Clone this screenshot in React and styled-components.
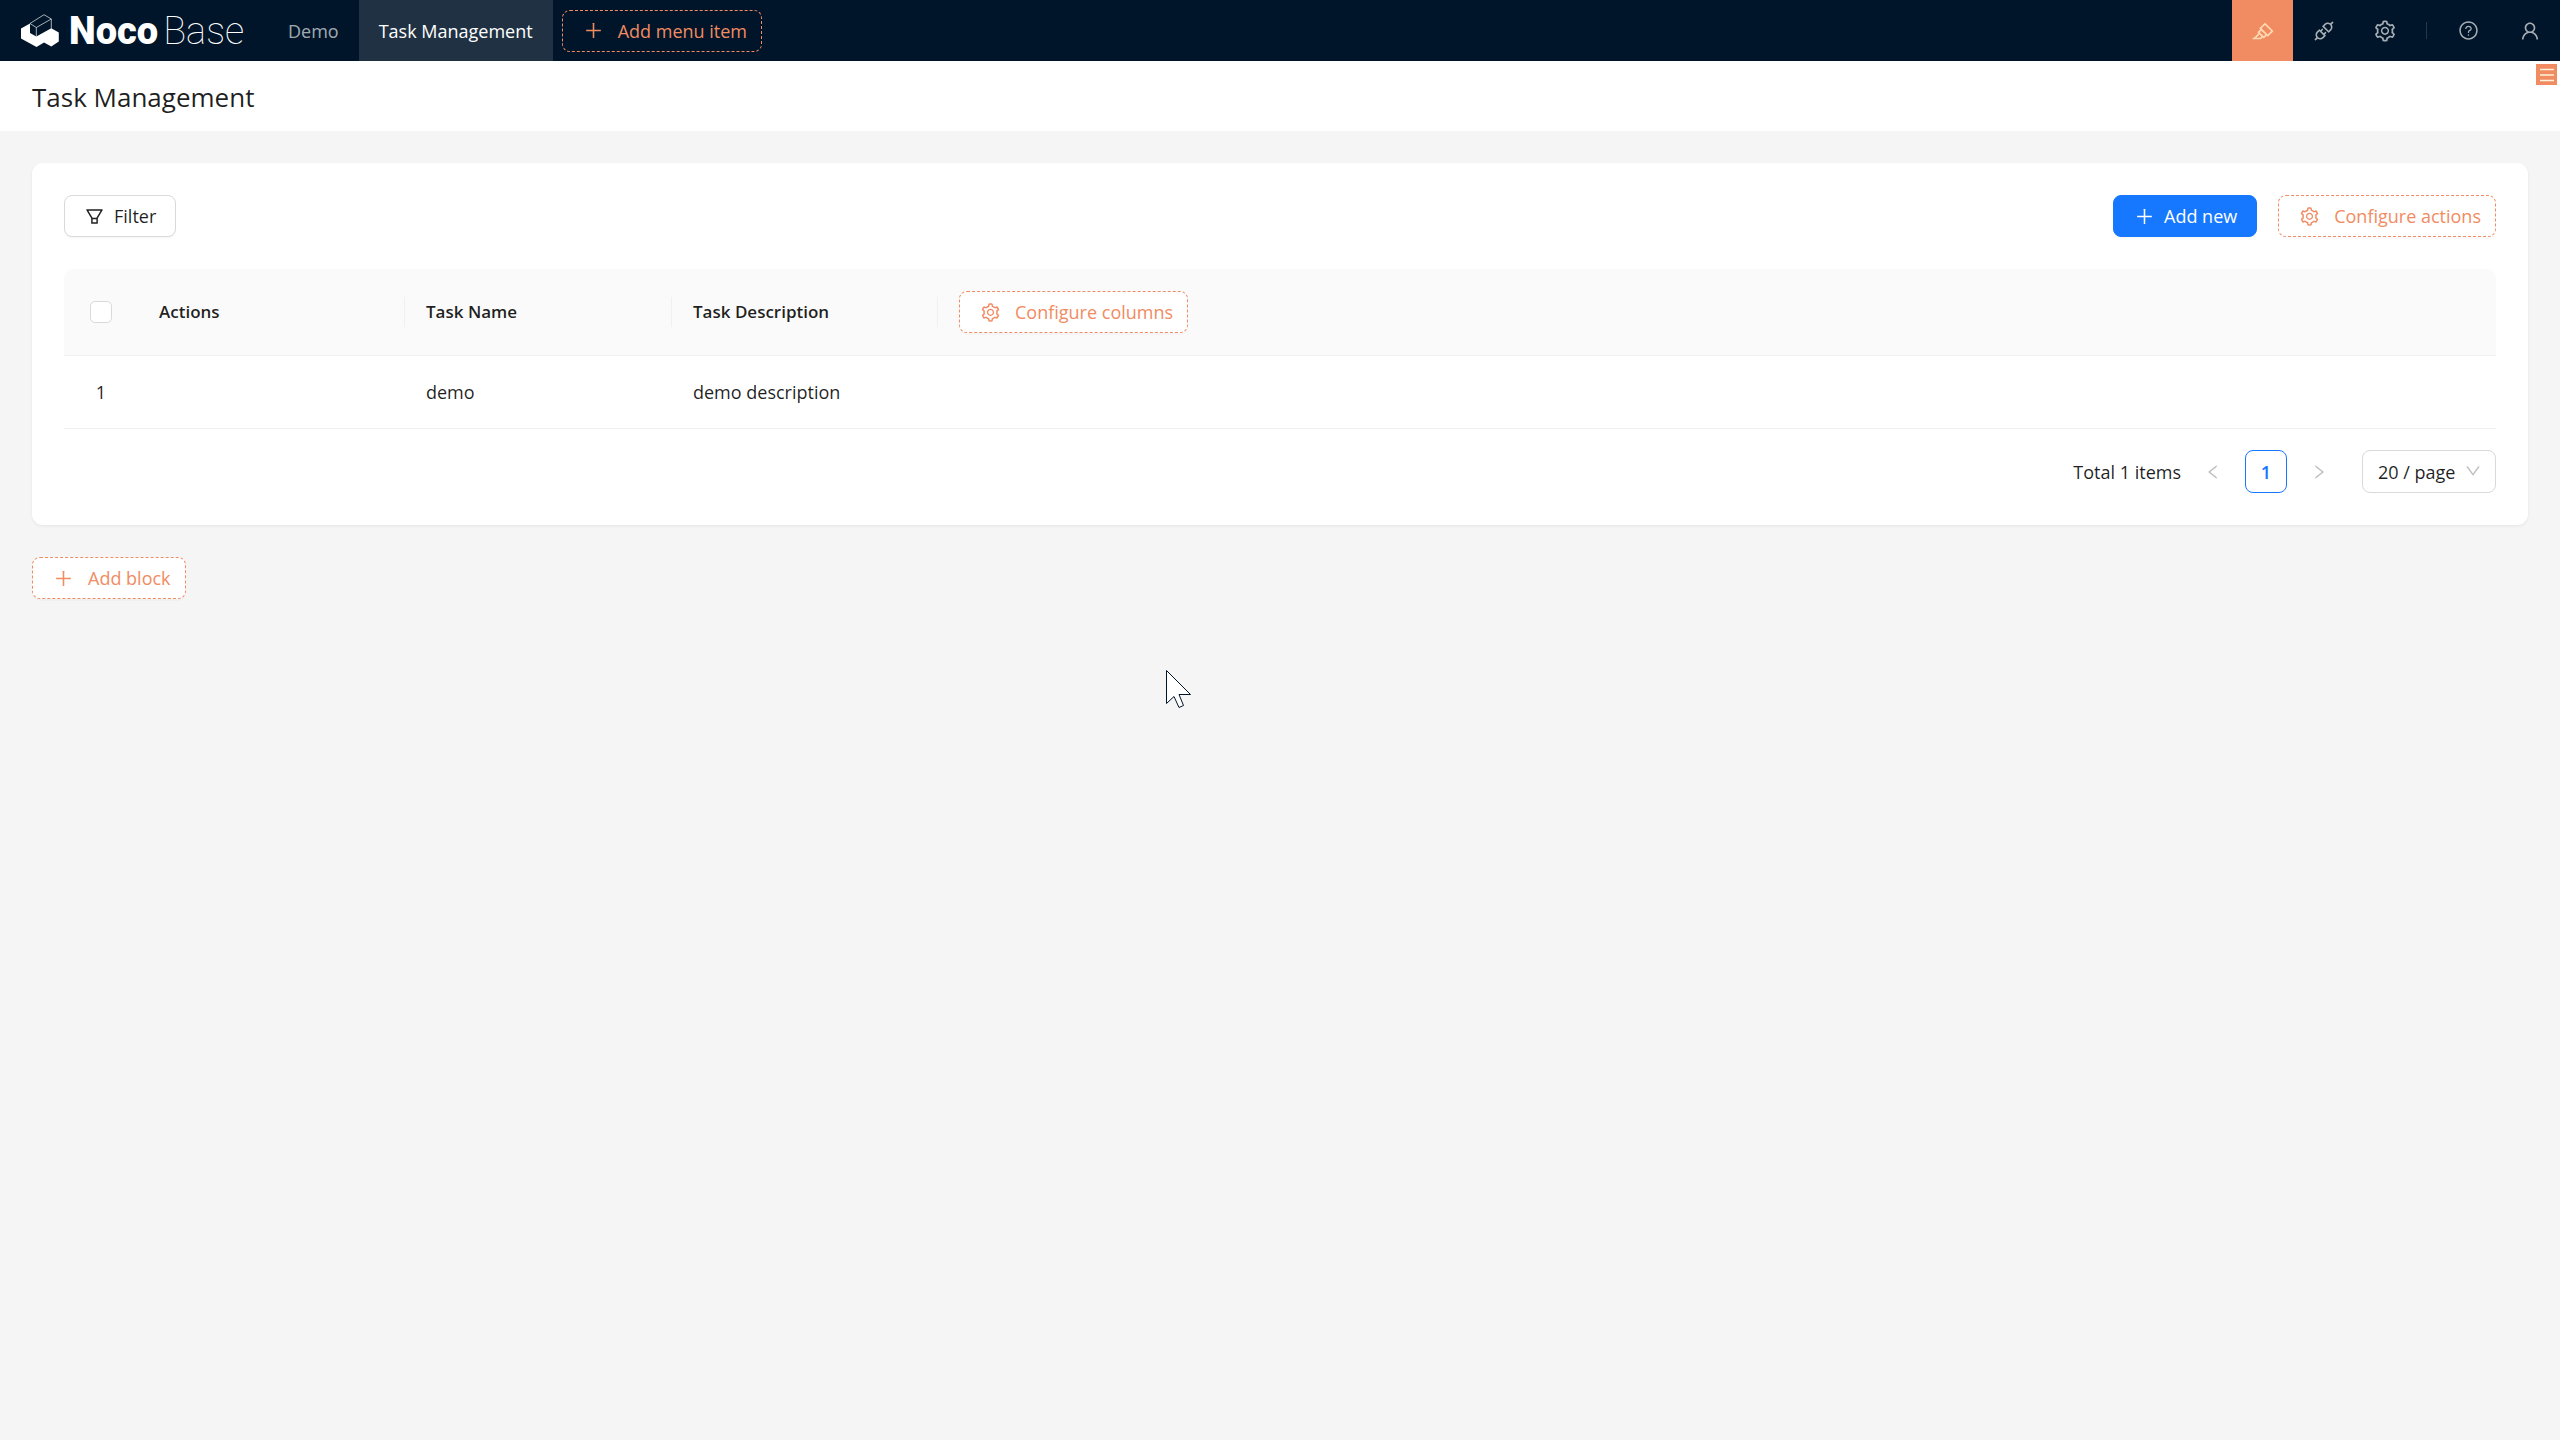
import React, { useState } from "react";
import styled, { createGlobalStyle } from "styled-components";
import {
  AiOutlineApi,
  AiOutlineDown,
  AiOutlineFilter,
  AiOutlineHighlight,
  AiOutlineLeft,
  AiOutlineMenu,
  AiOutlinePlus,
  AiOutlineQuestionCircle,
  AiOutlineRight,
  AiOutlineSetting,
  AiOutlineUser,
} from "react-icons/ai";

const color = {
  navy: "#001529",
  accent: "#f18b62",
  primary: "#1677ff",
  text: "rgba(0, 0, 0, 0.88)",
  page: "#f5f5f5",
  line: "#f0f0f0",
  border: "#d9d9d9",
};

const GlobalStyle = createGlobalStyle`
  *, *::before, *::after { box-sizing: border-box; }
  body {
    margin: 0;
    background: ${color.page};
    color: ${color.text};
    font-family: "Open Sans", "Noto Sans", sans-serif;
    font-size: 18px;
    line-height: 28px;
  }
  button, select, input { font: inherit; margin: 0; }
`;

const Header = styled.header`
  display: flex;
  align-items: stretch;
  height: 61px;
  background: ${color.navy};
`;

const Brand = styled.a`
  display: flex;
  align-items: center;
  gap: 10px;
  padding-left: 21px;
  width: 268px;
  color: #fff;
  text-decoration: none;
`;

const Wordmark = styled.span`
  display: flex;
  gap: 5px;
  font-family: Roboto, "Liberation Sans", sans-serif;
  font-size: 38px;
  line-height: 60px;
`;

const WordPart = styled.span`
  font-weight: ${(p) => p.$weight};
`;

const Menu = styled.nav`
  display: flex;
  flex: 1;
`;

const MenuLink = styled.a`
  display: flex;
  align-items: center;
  padding: 0 20px;
  color: ${(p) => (p.$active ? "#fff" : "rgba(255, 255, 255, 0.65)")};
  background: ${(p) => (p.$active ? "rgba(255, 255, 255, 0.12)" : "transparent")};
  text-decoration: none;
`;

const MenuAction = styled.div`
  display: flex;
  align-items: center;
  padding: 0 9px;
`;

const Tools = styled.div`
  display: flex;
  align-items: center;
`;

const ToolButton = styled.button`
  display: flex;
  align-items: center;
  justify-content: center;
  width: 61px;
  height: 61px;
  border: 0;
  padding: 0;
  font-size: ${(p) => p.$size || 24}px;
  color: ${(p) => (p.$active ? "#ffd9b0" : "rgba(255, 255, 255, 0.65)")};
  background: ${(p) => (p.$active ? color.accent : "transparent")};
`;

const Divider = styled.span`
  width: 1px;
  height: 17px;
  margin: 0 11px;
  background: rgba(255, 255, 255, 0.15);
`;

const Button = styled.button`
  display: inline-flex;
  align-items: center;
  gap: ${(p) => (p.$variant === "designer" ? 14 : 9)}px;
  height: 42px;
  padding: 0 ${(p) => (p.$variant === "designer" ? 14 : 19)}px 0 ${(p) => (p.$variant ? 20 : 19)}px;
  border: 1px ${(p) => (p.$variant === "designer" ? "dashed" : "solid")}
    ${(p) => ({ designer: color.accent, primary: color.primary }[p.$variant] || color.border)};
  border-radius: 8px;
  background: ${(p) => (p.$ghost ? "transparent" : p.$variant === "primary" ? color.primary : "#fff")};
  box-shadow: ${(p) => (p.$ghost ? "none" : "0 2px 0 rgba(0, 0, 0, 0.02)")};
  color: ${(p) => ({ designer: color.accent, primary: "#fff" }[p.$variant] || color.text)};
  font-size: 18px;
  font-weight: 400;
  white-space: nowrap;

  svg { font-size: 21px; }
`;

const PageHeader = styled.div`
  position: relative;
  display: flex;
  align-items: center;
  height: 70px;
  padding: 2px 32px 0;
  background: #fff;
`;

const Title = styled.h1`
  margin: 0;
  font-size: 26px;
  font-weight: 500;
  line-height: 42px;
`;

const PageHandle = styled.button`
  position: absolute;
  top: 3px;
  right: 3px;
  display: flex;
  align-items: center;
  justify-content: center;
  width: 21px;
  height: 21px;
  padding: 0;
  border: 0;
  background: ${color.accent};
  color: #fff3dc;
  font-size: 18px;
`;

const Content = styled.main`
  display: flex;
  flex-direction: column;
  align-items: flex-start;
  gap: 32px;
  padding: 32px;
`;

const Card = styled.section`
  width: 100%;
  padding: 32px;
  border-radius: 11px;
  background: #fff;
  box-shadow: 0 1px 3px rgba(0, 0, 0, 0.05), 0 2px 5px rgba(0, 0, 0, 0.02);
`;

const ActionBar = styled.div`
  display: flex;
  justify-content: space-between;
  margin-bottom: 32px;
`;

const ActionGroup = styled.div`
  display: flex;
  gap: 21px;
`;

const Table = styled.table`
  width: 100%;
  table-layout: fixed;
  border-collapse: separate;
  border-spacing: 0;
`;

const Col = styled.col`
  width: ${(p) => (p.$width ? `${p.$width}px` : "auto")};
`;

const HeadCell = styled.th`
  height: 87px;
  padding: 0 21px;
  border-bottom: 1px solid ${color.line};
  background: #fafafa;
  font-size: 17px;
  font-weight: 600;
  text-align: ${(p) => (p.$center ? "center" : "left")};

  &:first-child { border-top-left-radius: 11px; padding: 0; }
  &:last-child { border-top-right-radius: 11px; }
`;

const HeadLabel = styled.div`
  display: flex;
  align-items: center;
  height: 30px;
  margin-right: -21px;
  border-right: 1px solid ${color.line};
`;

const Cell = styled.td`
  height: 73px;
  padding: 0 21px;
  border-bottom: 1px solid ${color.line};
  text-align: ${(p) => (p.$center ? "center" : "left")};
`;

const Checkbox = styled.input`
  appearance: none;
  display: block;
  width: 22px;
  height: 22px;
  margin: 0 auto;
  border: 1px solid ${color.border};
  border-radius: 5px;
  background: ${(p) => (p.checked ? color.primary : "#fff")};
`;

const Pagination = styled.nav`
  display: flex;
  align-items: center;
  justify-content: flex-end;
  gap: 11px;
  margin-top: 21px;
`;

const PageButton = styled.button`
  display: flex;
  align-items: center;
  justify-content: center;
  width: 42px;
  height: 43px;
  padding: 0;
  border: 1px solid ${(p) => (p.$current ? color.primary : "transparent")};
  border-radius: 8px;
  background: ${(p) => (p.$current ? "#fff" : "transparent")};
  color: ${(p) => (p.$current ? color.primary : "rgba(0, 0, 0, 0.25)")};
  font-weight: 600;

  svg { font-size: 18px; }
`;

const SizePicker = styled.label`
  position: relative;
  display: flex;
  margin-left: 11px;
  color: rgba(0, 0, 0, 0.25);

  svg {
    position: absolute;
    top: 12px;
    right: 14px;
    font-size: 18px;
    pointer-events: none;
  }
`;

const Select = styled.select`
  appearance: none;
  width: 134px;
  height: 43px;
  padding: 0 32px 0 15px;
  border: 1px solid ${color.border};
  border-radius: 8px;
  background: #fff;
  color: ${color.text};
`;

const Pointer = styled.svg`
  position: absolute;
  top: 669px;
  left: 1165px;
  width: 28px;
  height: 40px;
  pointer-events: none;
`;

function LogoMark() {
  return (
    <svg width="38" height="34" viewBox="0 0 38 34" aria-hidden="true">
      <path d="M0 14.500 9 9.500V19L15.300 22.500 30.300 14.200 37.800 18.500V27.500L30.300 32.500 23 28.500 15.500 33 0 24.500Z" fill="#fff" />
      <path d="M9 9.500 23 .7 30.300 5 15.300 13.500ZM15.300 13.500V22.500M30.300 5V14.500" fill="none" stroke="#fff" strokeOpacity=".65" />
    </svg>
  );
}

export default function App() {
  const [checked, setChecked] = useState(false);
  return (
    <>
      <GlobalStyle />
      <Header>
        <Brand href="#" aria-label="NocoBase">
          <LogoMark />
          <Wordmark>
            <WordPart $weight={900}>Noco</WordPart>
            <WordPart $weight={100}>Base</WordPart>
          </Wordmark>
        </Brand>
        <Menu>
          <MenuLink href="#">Demo</MenuLink>
          <MenuLink href="#" $active>Task Management</MenuLink>
          <MenuAction>
            <Button type="button" $variant="designer" $ghost>
              <AiOutlinePlus />Add menu item
            </Button>
          </MenuAction>
        </Menu>
        <Tools>
          <ToolButton type="button" aria-label="UI editor" $active><AiOutlineHighlight /></ToolButton>
          <ToolButton type="button" aria-label="Plugins"><AiOutlineApi /></ToolButton>
          <ToolButton type="button" aria-label="Settings"><AiOutlineSetting /></ToolButton>
          <Divider />
          <ToolButton type="button" aria-label="Help" $size={21}><AiOutlineQuestionCircle /></ToolButton>
          <ToolButton type="button" aria-label="User" $size={22}><AiOutlineUser /></ToolButton>
        </Tools>
      </Header>
      <PageHeader>
        <Title>Task Management</Title>
        <PageHandle type="button" aria-label="Page settings"><AiOutlineMenu /></PageHandle>
      </PageHeader>
      <Content>
        <Card>
          <ActionBar>
            <Button type="button"><AiOutlineFilter />Filter</Button>
            <ActionGroup>
              <Button type="button" $variant="primary"><AiOutlinePlus />Add new</Button>
              <Button type="button" $variant="designer"><AiOutlineSetting />Configure actions</Button>
            </ActionGroup>
          </ActionBar>
          <Table>
            <colgroup>
              <Col $width={74} />
              <Col $width={267} />
              <Col $width={267} />
              <Col $width={266} />
              <Col />
            </colgroup>
            <thead>
              <tr>
                <HeadCell $center>
                  <Checkbox
                    type="checkbox"
                    aria-label="Select all"
                    checked={checked}
                    onChange={(e) => setChecked(e.target.checked)}
                  />
                </HeadCell>
                <HeadCell><HeadLabel>Actions</HeadLabel></HeadCell>
                <HeadCell><HeadLabel>Task Name</HeadLabel></HeadCell>
                <HeadCell><HeadLabel>Task Description</HeadLabel></HeadCell>
                <HeadCell>
                  <Button type="button" $variant="designer"><AiOutlineSetting />Configure columns</Button>
                </HeadCell>
              </tr>
            </thead>
            <tbody>
              <tr>
                <Cell $center>1</Cell>
                <Cell />
                <Cell>demo</Cell>
                <Cell>demo description</Cell>
                <Cell />
              </tr>
            </tbody>
          </Table>
          <Pagination aria-label="Pagination">
            <span>Total 1 items</span>
            <PageButton type="button" aria-label="Previous page"><AiOutlineLeft /></PageButton>
            <PageButton type="button" $current>1</PageButton>
            <PageButton type="button" aria-label="Next page"><AiOutlineRight /></PageButton>
            <SizePicker>
              <Select aria-label="Page size" defaultValue="20">
                <option value="20">20 / page</option>
                <option value="50">50 / page</option>
              </Select>
              <AiOutlineDown />
            </SizePicker>
          </Pagination>
        </Card>
        <Button type="button" $variant="designer"><AiOutlinePlus />Add block</Button>
      </Content>
      <Pointer viewBox="0 0 28 40" aria-hidden="true">
        <path d="M1.500 1.500V34.500L9 27.500 14 38.500 18.500 36.500 14 25.500H25.500Z" fill="#fff" stroke={color.navy} />
      </Pointer>
    </>
  );
}
